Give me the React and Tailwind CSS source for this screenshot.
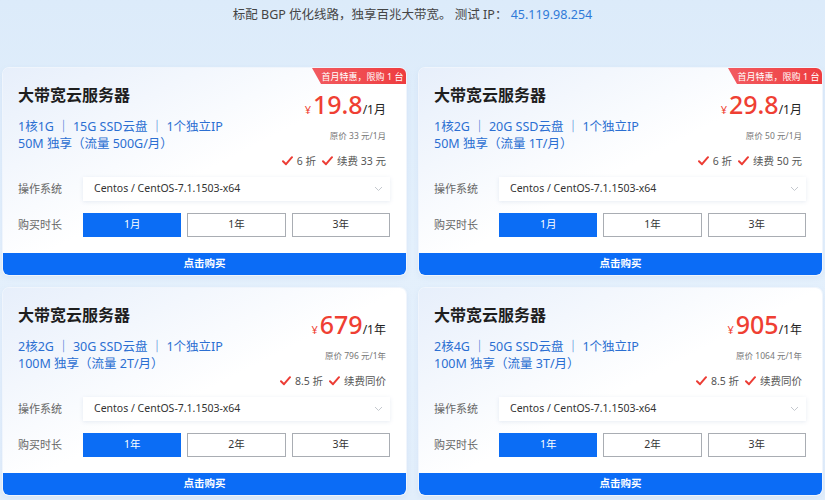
import React from "react";

const font = { fontFamily: '"Noto Sans", "Noto Sans CJK SC", sans-serif' };

function Check() {
  return (
    <svg width="11" height="10" viewBox="0 0 11 10" className="mr-[4px]">
      <path d="M1 5.2 L4 8.2 L10 1.2" fill="none" stroke="#ec3d35" strokeWidth="2" strokeLinecap="round" strokeLinejoin="round" />
    </svg>
  );
}

function Chevron() {
  return (
    <svg width="9" height="6" viewBox="0 0 9 6">
      <path d="M1 1 L4.5 4.5 L8 1" fill="none" stroke="#c4c8ce" strokeWidth="1" />
    </svg>
  );
}

function Card({ spec1, spec2, price, unit, orig, disc, renew, durations, badge }) {
  return (
    <div className="relative flex h-[207px] flex-col overflow-hidden rounded-[6px] bg-linear-to-br from-[#e7effb] via-white to-white shadow-[0_0_0_1px_rgba(240,245,252,1),0_2px_6px_rgba(120,160,210,0.15)]">
      {badge && (
        <div className="absolute right-0 top-0 flex h-[16px] w-[94px] items-center justify-center rounded-bl-[3px] bg-linear-to-r from-[#f25a60] to-[#ee3c3f] pl-[7px] text-[9px] leading-none text-white [clip-path:polygon(0_0,100%_0,100%_100%,9px_100%)]">
          首月特惠，限购 1 台
        </div>
      )}
      <div className="flex h-[109px] justify-between pl-[15px] pr-[20px]">
        <div className="pt-[16px]">
          <div className="text-[16px] font-bold leading-[22px] text-[#1e1e1e]">大带宽云服务器</div>
          <div className="mt-[12px] text-[12.5px] leading-[17px] text-[#2b6fd2]">
            <div>{spec1}</div>
            <div>{spec2}</div>
          </div>
        </div>
        <div className="flex flex-col items-end pt-[22px]">
          <div className="flex items-baseline leading-[28px]">
            <span className="mr-[2px] text-[11px] text-[#ef3f33]">¥</span>
            <span className="text-[25px] font-medium text-[#ef3f33]">{price}</span>
            <span className="text-[12px] text-[#222]">{unit}</span>
          </div>
          <div className="mt-[5px] text-[8.5px] leading-[14px] text-[#777]">{orig}</div>
          <div className="mt-[10px] flex items-center text-[10.5px] leading-[16px] text-[#555]">
            <Check />
            <span className="mr-[6px]">{disc}</span>
            <Check />
            <span>{renew}</span>
          </div>
        </div>
      </div>
      <div className="flex h-[24px] items-center pl-[15px] pr-[16px]">
        <div className="w-[65px] text-[11px] text-[#666]">操作系统</div>
        <div className="flex h-full flex-1 items-center justify-between bg-white pl-[11px] pr-[7px] shadow-[0_1px_4px_rgba(120,150,190,0.18)]">
          <span className="text-[10.5px] text-[#333]">Centos / CentOS-7.1.1503-x64</span>
          <Chevron />
        </div>
      </div>
      <div className="mt-[12px] flex h-[24px] items-center pl-[15px] pr-[16px]">
        <div className="w-[65px] text-[11px] text-[#666]">购买时长</div>
        <div className="grid h-full flex-1 grid-cols-3 gap-[6px]">
          {durations.map((d, i) => (
            <div
              key={d}
              className={
                i === 0
                  ? "flex items-center justify-center bg-[#0b6df5] text-[10.5px] text-white"
                  : "flex items-center justify-center border border-[#a9adb3] bg-white text-[10.5px] text-[#333]"
              }
            >
              {d}
            </div>
          ))}
        </div>
      </div>
      <div className="flex-1" />
      <div className="flex h-[22px] items-center justify-center rounded-b-[5px] bg-[#0b6cf6] text-[10.5px] font-bold text-white">
        点击购买
      </div>
    </div>
  );
}

export default function App() {
  const cards = [
    {
      spec1: "1核1G ｜ 15G SSD云盘 ｜ 1个独立IP",
      spec2: "50M 独享（流量 500G/月）",
      price: "19.8",
      unit: "/1月",
      orig: "原价 33 元/1月",
      disc: "6 折",
      renew: "续费 33 元",
      durations: ["1月", "1年", "3年"],
      badge: true,
    },
    {
      spec1: "1核2G ｜ 20G SSD云盘 ｜ 1个独立IP",
      spec2: "50M 独享（流量 1T/月）",
      price: "29.8",
      unit: "/1月",
      orig: "原价 50 元/1月",
      disc: "6 折",
      renew: "续费 50 元",
      durations: ["1月", "1年", "3年"],
      badge: true,
    },
    {
      spec1: "2核2G ｜ 30G SSD云盘 ｜ 1个独立IP",
      spec2: "100M 独享（流量 2T/月）",
      price: "679",
      unit: "/1年",
      orig: "原价 796 元/1年",
      disc: "8.5 折",
      renew: "续费同价",
      durations: ["1年", "2年", "3年"],
    },
    {
      spec1: "2核4G ｜ 50G SSD云盘 ｜ 1个独立IP",
      spec2: "100M 独享（流量 3T/月）",
      price: "905",
      unit: "/1年",
      orig: "原价 1064 元/1年",
      disc: "8.5 折",
      renew: "续费同价",
      durations: ["1年", "2年", "3年"],
    },
  ];
  return (
    <div style={font} className="h-[500px] w-[825px] overflow-hidden bg-linear-to-b from-[#dcebfa] via-[#e4f0fc] to-[#e2eefb]">
      <div className="flex h-[68px] justify-center pt-[6px] text-[12.5px] leading-[18px] text-[#444]">
        <span>
          标配 BGP 优化线路，独享百兆大带宽。 测试 IP： <span className="text-[#2f7ad8]">45.119.98.254</span>
        </span>
      </div>
      <div className="grid grid-cols-2 gap-x-[13px] gap-y-[13px] px-[3px]">
        {cards.map((c, i) => (
          <Card key={i} {...c} />
        ))}
      </div>
    </div>
  );
}
